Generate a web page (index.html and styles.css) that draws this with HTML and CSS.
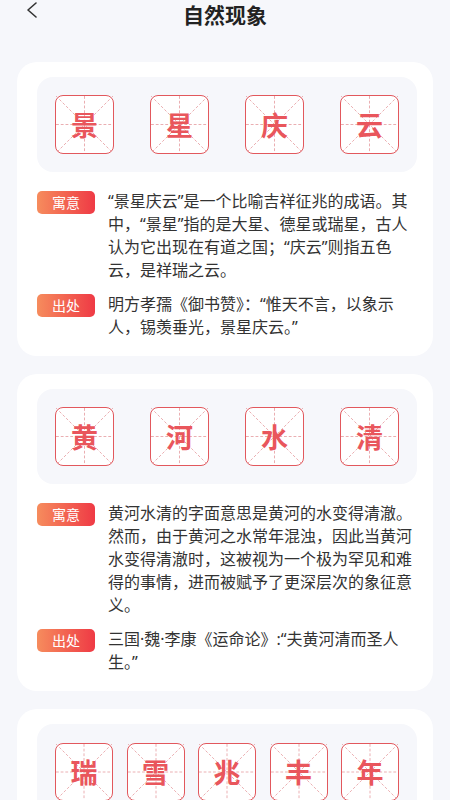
FILE: index.html
```html
<!DOCTYPE html>
<html lang="zh-CN">
<head>
    <meta charset="UTF-8">
    <meta name="viewport" content="width=device-width, initial-scale=1.0">
    <title>自然现象</title>
    <link rel="stylesheet" href="styles.css">
</head>
<body>

    <header class="topbar">
        <span class="back">
            <svg width="14" height="16" viewBox="0 0 14 16"><polyline points="11,1 3,8 11,15" fill="none" stroke="#333" stroke-width="1.6" stroke-linecap="round" stroke-linejoin="round"/></svg>
        </span>
        <h1>自然现象</h1>
    </header>

    <main class="list">

        <!-- 景星庆云 -->
        <div class="card">
            <div class="chars">
                <div class="char-box"><svg class="grid" viewBox="0 0 60 60"><line x1="30" y1="0" x2="30" y2="60"/><line x1="0" y1="30" x2="60" y2="30"/><line x1="0" y1="0" x2="60" y2="60"/><line x1="60" y1="0" x2="0" y2="60"/></svg><span>景</span></div>
                <div class="char-box"><svg class="grid" viewBox="0 0 60 60"><line x1="30" y1="0" x2="30" y2="60"/><line x1="0" y1="30" x2="60" y2="30"/><line x1="0" y1="0" x2="60" y2="60"/><line x1="60" y1="0" x2="0" y2="60"/></svg><span>星</span></div>
                <div class="char-box"><svg class="grid" viewBox="0 0 60 60"><line x1="30" y1="0" x2="30" y2="60"/><line x1="0" y1="30" x2="60" y2="30"/><line x1="0" y1="0" x2="60" y2="60"/><line x1="60" y1="0" x2="0" y2="60"/></svg><span>庆</span></div>
                <div class="char-box"><svg class="grid" viewBox="0 0 60 60"><line x1="30" y1="0" x2="30" y2="60"/><line x1="0" y1="30" x2="60" y2="30"/><line x1="0" y1="0" x2="60" y2="60"/><line x1="60" y1="0" x2="0" y2="60"/></svg><span>云</span></div>
            </div>
            <div class="row">
                <span class="tag">寓意</span>
                <p>“景星庆云”是一个比喻吉祥征兆的成语。其中，“景星”指的是大星、德星或瑞星，古人认为它出现在有道之国；“庆云”则指五色云，是祥瑞之云。</p>
            </div>
            <div class="row">
                <span class="tag">出处</span>
                <p>明方孝孺《御书赞》：“惟天不言，以象示人，锡羡垂光，景星庆云。”</p>
            </div>
        </div>

        <!-- 黄河水清 -->
        <div class="card">
            <div class="chars">
                <div class="char-box"><svg class="grid" viewBox="0 0 60 60"><line x1="30" y1="0" x2="30" y2="60"/><line x1="0" y1="30" x2="60" y2="30"/><line x1="0" y1="0" x2="60" y2="60"/><line x1="60" y1="0" x2="0" y2="60"/></svg><span>黄</span></div>
                <div class="char-box"><svg class="grid" viewBox="0 0 60 60"><line x1="30" y1="0" x2="30" y2="60"/><line x1="0" y1="30" x2="60" y2="30"/><line x1="0" y1="0" x2="60" y2="60"/><line x1="60" y1="0" x2="0" y2="60"/></svg><span>河</span></div>
                <div class="char-box"><svg class="grid" viewBox="0 0 60 60"><line x1="30" y1="0" x2="30" y2="60"/><line x1="0" y1="30" x2="60" y2="30"/><line x1="0" y1="0" x2="60" y2="60"/><line x1="60" y1="0" x2="0" y2="60"/></svg><span>水</span></div>
                <div class="char-box"><svg class="grid" viewBox="0 0 60 60"><line x1="30" y1="0" x2="30" y2="60"/><line x1="0" y1="30" x2="60" y2="30"/><line x1="0" y1="0" x2="60" y2="60"/><line x1="60" y1="0" x2="0" y2="60"/></svg><span>清</span></div>
            </div>
            <div class="row">
                <span class="tag">寓意</span>
                <p>黄河水清的字面意思是黄河的水变得清澈。然而，由于黄河之水常年混浊，因此当黄河水变得清澈时，这被视为一个极为罕见和难得的事情，进而被赋予了更深层次的象征意义。</p>
            </div>
            <div class="row">
                <span class="tag">出处</span>
                <p>三国·魏·李康《运命论》:“夫黄河清而圣人生。”</p>
            </div>
        </div>

        <!-- 瑞雪兆丰年 -->
        <div class="card">
            <div class="chars">
                <div class="char-box small"><svg class="grid" viewBox="0 0 60 60"><line x1="30" y1="0" x2="30" y2="60"/><line x1="0" y1="30" x2="60" y2="30"/><line x1="0" y1="0" x2="60" y2="60"/><line x1="60" y1="0" x2="0" y2="60"/></svg><span>瑞</span></div>
                <div class="char-box small"><svg class="grid" viewBox="0 0 60 60"><line x1="30" y1="0" x2="30" y2="60"/><line x1="0" y1="30" x2="60" y2="30"/><line x1="0" y1="0" x2="60" y2="60"/><line x1="60" y1="0" x2="0" y2="60"/></svg><span>雪</span></div>
                <div class="char-box small"><svg class="grid" viewBox="0 0 60 60"><line x1="30" y1="0" x2="30" y2="60"/><line x1="0" y1="30" x2="60" y2="30"/><line x1="0" y1="0" x2="60" y2="60"/><line x1="60" y1="0" x2="0" y2="60"/></svg><span>兆</span></div>
                <div class="char-box small"><svg class="grid" viewBox="0 0 60 60"><line x1="30" y1="0" x2="30" y2="60"/><line x1="0" y1="30" x2="60" y2="30"/><line x1="0" y1="0" x2="60" y2="60"/><line x1="60" y1="0" x2="0" y2="60"/></svg><span>丰</span></div>
                <div class="char-box small"><svg class="grid" viewBox="0 0 60 60"><line x1="30" y1="0" x2="30" y2="60"/><line x1="0" y1="30" x2="60" y2="30"/><line x1="0" y1="0" x2="60" y2="60"/><line x1="60" y1="0" x2="0" y2="60"/></svg><span>年</span></div>
            </div>
            <div class="row">
                <span class="tag">寓意</span>
                <p>冬天下几场大雪，是来年庄稼获得丰收的预兆。</p>
            </div>
        </div>

    </main>

</body>
</html>
```

FILE: styles.css
```css
body {
    font-family: "Noto Sans", "Noto Sans CJK SC", sans-serif;
    background-color: #f6f7fb;
    color: #333;
    margin: 0;
    padding: 0;
}
.topbar {
    position: relative;
    height: 28px;
    display: flex;
    align-items: center;
    justify-content: center;
}
.back {
    position: absolute;
    left: 25px;
    top: 1px;
}
.topbar h1 {
    margin: 0;
    font-family: "Noto Sans CJK SC", sans-serif;
    font-size: 21px;
    font-weight: 700;
    line-height: 28px;
    color: #222;
}
.list {
    padding: 34px 17px 20px;
    display: flex;
    flex-direction: column;
    gap: 18px;
}
.card {
    background-color: white;
    border-radius: 20px;
    padding: 15px 16px 17px 20px;
}
.chars {
    background-color: #f6f7fb;
    border-radius: 16px;
    height: 95px;
    padding: 0 18px;
    display: flex;
    align-items: center;
    justify-content: space-between;
}
.char-box {
    position: relative;
    width: 59px;
    height: 59px;
    box-sizing: border-box;
    border: 1.6px solid #e2585d;
    border-radius: 8px;
    background-color: white;
    display: flex;
    align-items: center;
    justify-content: center;
}
.char-box.small {
    width: 58px;
    height: 58px;
}
.grid {
    position: absolute;
    inset: 0;
    width: 100%;
    height: 100%;
}
.grid line {
    stroke: #e9aaad;
    stroke-width: 1;
    stroke-dasharray: 3 2;
}
.char-box span {
    position: relative;
    font-family: "Noto Sans CJK SC", sans-serif;
    font-size: 27px;
    font-weight: 700;
    color: #e9565c;
    line-height: 1;
}
.row {
    display: flex;
    gap: 13px;
    margin-top: 11px;
}
.chars + .row {
    margin-top: 18px;
}
.tag {
    flex: none;
    width: 58px;
    height: 23px;
    line-height: 23px;
    margin-top: 1px;
    border-radius: 5px;
    background: linear-gradient(to right, #f68c5d, #ef3a45);
    color: white;
    font-family: "Noto Sans CJK SC", sans-serif;
    font-size: 14px;
    text-align: center;
}
.row p {
    margin: 0;
    font-size: 16px;
    line-height: 23px;
    color: #333;
}
```
